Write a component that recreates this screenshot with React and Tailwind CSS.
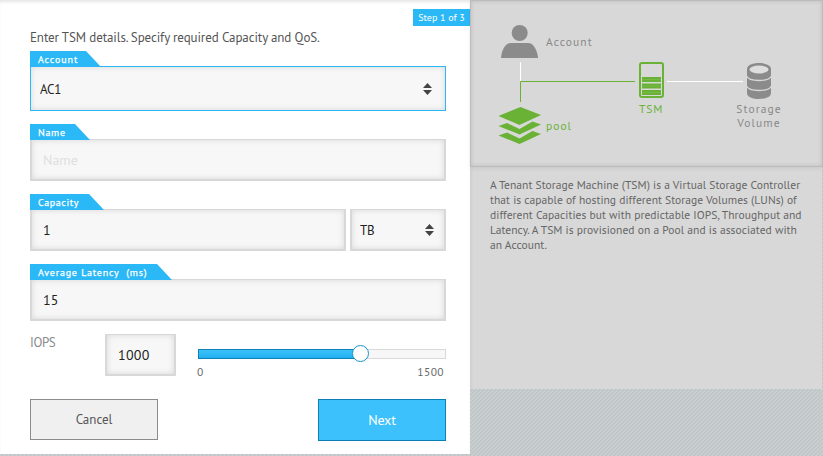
import React from "react";

function Tab({ children, className }) {
  return (
    <div
      className={`relative z-10 -mb-px flex h-4 items-center bg-[#2bb8f6] pt-[2px] pl-2 text-[10px] leading-none font-medium whitespace-pre text-white [-webkit-text-stroke:0.25px_white] [clip-path:polygon(0_0,calc(100%-15px)_0,100%_100%,0_100%)] ${className}`}
    >
      {children}
    </div>
  );
}

function Box({ children, className }) {
  return (
    <div
      className={`flex h-[42px] items-center border-2 border-t border-[#d9d7d7] bg-[#f7f7f7] pt-[2px] text-[14px] text-[#222] shadow-[inset_0_0_6px_rgba(0,0,0,0.13)] ${className}`}
    >
      {children}
    </div>
  );
}

function Sorter() {
  return (
    <svg width="9" height="12" viewBox="0 0 9 12" fill="#444" className="mb-[2px] ml-auto shrink-0">
      <path d="M0 5 4.500 0 9 5zM0 7h9L4.500 12z" />
    </svg>
  );
}

function Wizard() {
  return (
    <main className="relative h-[454px] w-[470px] shrink-0 bg-white px-[30px] pr-6 pt-[29px] shadow-[inset_0_3px_3px_-1px_rgba(0,0,0,0.1)]">
      <div className="absolute top-[9px] right-0 flex h-[17px] w-[57px] items-center justify-center bg-[#2bb8f6] text-[10px] text-white">
        Step 1 of 3
      </div>
      <p className="h-[22px] text-[13px] leading-[18px] tracking-[-0.1px] whitespace-nowrap text-[#555]">
        Enter TSM details. Specify required Capacity and QoS.
      </p>

      <Tab className="w-[71px] tracking-[0.9px]">Account</Tab>
      <div className="flex h-[45px] items-center border border-[#2bb8f6] bg-[#f7f7f7] pt-[2px] pr-[13px] pl-[9px] text-[13px] text-[#222] shadow-[inset_0_0_6px_rgba(0,0,0,0.13)]">
        <span className="tracking-[-0.2px]">AC1</span>
        <Sorter />
      </div>

      <Tab className="mt-[13px] w-[60px] tracking-[0.7px]">Name</Tab>
      <Box className="pl-[11px]">
        <span className="text-[#dfdfdf]">Name</span>
      </Box>

      <Tab className="mt-[13px] w-[74px] tracking-[0.6px]">Capacity</Tab>
      <div className="flex gap-1">
        <Box className="w-[316px] pl-[11px]">1</Box>
        <Box className="w-24 pr-2.5 pl-2 !text-[13px] tracking-[-0.2px]">
          TB
          <Sorter />
        </Box>
      </div>

      <Tab className="mt-[13px] w-[142px] tracking-[0.8px]">Average Latency  (ms)</Tab>
      <Box className="pl-[11px]">15</Box>

      <div className="mt-[13px] flex h-[42px]">
        <span className="w-[75px] text-[13px] leading-[17px] tracking-[-0.4px] text-[#888]">IOPS</span>
        <Box className="w-[71px] pl-[11px] tracking-[0.3px]">1000</Box>
        <div className="ml-[22px] w-[248px] pt-[15px]">
          <div className="relative h-2.5 border border-[#d9d9d9] bg-[#f7f7f7]">
            <div className="absolute -top-px -left-px h-2.5 w-[163px] border border-[#0f82b5] bg-linear-to-b from-[#3cc2fa] to-[#20aff0]" />
            <div className="absolute -top-[5px] left-[153px] size-[17px] rounded-full border border-[#1b94c9] bg-white" />
          </div>
          <div className="mt-[5px] -ml-px flex justify-between pr-[2px] text-[11.5px] leading-4 tracking-[0.4px] text-[#666]">
            <span>0</span>
            <span>1500</span>
          </div>
        </div>
      </div>

      <div className="mt-[23px] flex items-start justify-between">
        <button className="h-[41px] w-32 border border-[#8c8c8c] bg-[#f0f0f0] text-[13px] text-[#555]">
          Cancel
        </button>
        <button className="h-[42px] w-32 border border-[#0c80b4] bg-[#3dc1fd] text-[14px] tracking-[-0.2px] text-white">
          Next
        </button>
      </div>
    </main>
  );
}

function Diagram() {
  return (
    <div className="relative h-[167px] w-[353px] border border-[#bcbcbc] bg-[#d8d8d8] text-[11.5px] leading-[14px] shadow-[inset_0_0_4px_rgba(0,0,0,0.13),0_2px_4px_rgba(0,0,0,0.06)]">
      <svg width="353" height="167" viewBox="0 0 353 167" className="absolute -top-px -left-px">
        <g fill="#8b8b8b">
          <circle cx="49.7" cy="33" r="8" />
          <path d="M31 58C31.500 51 35 43 41 43H58C64 43 67.500 51 68 58z" />
        </g>
        <path d="M50.500 62V81M197 81.500H273" stroke="#fff" fill="none" />
        <path d="M50.500 102V81.500H165" stroke="#69b236" fill="none" />
        <g fill="#69b236">
          <path d="M28.500 116 50.500 107 71 115 49.500 125z" />
          <path d="M28.500 126 37 123 49.500 129 62.500 121.500 71 124.500 49.500 134.500z" />
          <path d="M28.500 135.500 37 132.500 49.500 138.500 62.500 131 71 134 49.500 144z" />
          <rect x="172" y="77" width="19" height="5" />
          <rect x="172" y="83.500" width="19" height="5" />
          <rect x="172" y="90" width="19" height="5" />
        </g>
        <path d="M172 79.500h19M172 86h19M172 92.500h19" stroke="#7fbd54" strokeWidth="0.6" />
        <rect x="170" y="63" width="23" height="34" rx="2" stroke="#69b236" strokeWidth="2" fill="none" />
        <path d="M277 69C277 61 301 61 301 69V93C301 101 277 101 277 93z" fill="#8b8b8b" />
        <ellipse cx="289" cy="69.500" rx="9.500" ry="4" fill="#dedede" />
        <path d="M276.500 76C279 82 299 82 301.500 76M276.500 86C279 92 299 92 301.500 86" stroke="#d8d8d8" strokeWidth="1.300" fill="none" />
      </svg>
      <span className="absolute top-[34px] left-[75px] tracking-[1.1px] text-[#888]">Account</span>
      <span className="absolute top-[118px] left-[75px] tracking-[1px] text-[#69b236]">pool</span>
      <span className="absolute top-[101px] left-[168px] tracking-[0.9px] text-[#69b236]">TSM</span>
      <span className="absolute top-[101px] left-[257px] w-[62px] text-center tracking-[1.1px] text-[#888]">
        Storage Volume
      </span>
    </div>
  );
}

export default function App() {
  return (
    <div className="flex h-[456px] w-[823px] items-start overflow-hidden bg-[#c5cacb] bg-[repeating-linear-gradient(135deg,#c0c6c7_0_1.4px,#c9cecf_1.4px_2.83px)] font-['PT_Sans','Noto_Sans',sans-serif]">
      <Wizard />
      <aside className="h-[389px] w-[352px] bg-[#d8d8d8] shadow-[inset_5px_0_4px_-4px_rgba(0,0,0,0.06)]">
        <Diagram />
        <p className="pt-[10px] pl-5 text-[11.5px] leading-[15px] tracking-[0.055px] whitespace-nowrap text-[#666]">
          A Tenant Storage Machine (TSM) is a Virtual Storage Controller
          <br />
          that is capable of hosting different Storage Volumes (LUNs) of
          <br />
          different Capacities but with predictable IOPS, Throughput and
          <br />
          Latency. A TSM is provisioned on a Pool and is associated with
          <br />
          an Account.
        </p>
      </aside>
    </div>
  );
}
